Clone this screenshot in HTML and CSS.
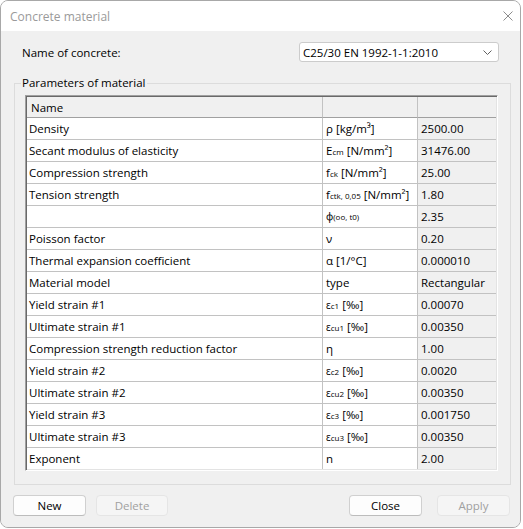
FILE: index.html
```html
<!DOCTYPE html>
<html>
<head>
<meta charset="utf-8">
<link rel="stylesheet" href="styles.css">
</head>
<body>
<div class="window">
  <div class="titlebar">
    <span class="title">Concrete material</span>
    <svg class="close" width="10" height="10" viewBox="0 0 10 10"><path d="M0.5 0.5 L9.5 9.5 M9.5 0.5 L0.5 9.5" stroke="#8c8c8c" stroke-width="1" fill="none"/></svg>
  </div>
  <div class="content">
    <div class="name-row">
      <span>Name of concrete:</span>
      <div class="combo">
        <span>C25/30 EN 1992-1-1:2010</span>
        <svg width="9" height="5" viewBox="0 0 9 5"><path d="M0.5 0.5 L4.5 4.5 L8.5 0.5" stroke="#606060" stroke-width="1" fill="none"/></svg>
      </div>
    </div>
    <fieldset class="group">
      <legend>Parameters of material</legend>
      <div class="grid">
        <div class="cell head name">Name</div><div class="cell head"></div><div class="cell head val"></div>

        <div class="cell">Density</div><div class="cell unit">ρ [kg/m³]</div><div class="cell val">2500.00</div>
        <div class="cell">Secant modulus of elasticity</div><div class="cell unit">E<span class="sub">cm</span>&nbsp;[N/mm²]</div><div class="cell val">31476.00</div>
        <div class="cell">Compression strength</div><div class="cell unit">f<span class="sub">ck</span>&nbsp;[N/mm²]</div><div class="cell val">25.00</div>
        <div class="cell">Tension strength</div><div class="cell unit">f<span class="sub">ctk, 0,05</span>&nbsp;[N/mm²]</div><div class="cell val">1.80</div>
        <div class="cell"></div><div class="cell unit"><span class="sym">ϕ</span><span class="sub">(oo, t0)</span></div><div class="cell val">2.35</div>
        <div class="cell">Poisson factor</div><div class="cell unit">ν</div><div class="cell val">0.20</div>
        <div class="cell">Thermal expansion coefficient</div><div class="cell unit">α [1/°C]</div><div class="cell val">0.000010</div>
        <div class="cell">Material model</div><div class="cell unit">type</div><div class="cell val">Rectangular</div>
        <div class="cell">Yield strain #1</div><div class="cell unit"><span class="sym">ε</span><span class="sub">c1</span>&nbsp;[‰]</div><div class="cell val">0.00070</div>
        <div class="cell">Ultimate strain #1</div><div class="cell unit"><span class="sym">ε</span><span class="sub">cu1</span>&nbsp;[‰]</div><div class="cell val">0.00350</div>
        <div class="cell">Compression strength reduction factor</div><div class="cell unit">η</div><div class="cell val">1.00</div>
        <div class="cell">Yield strain #2</div><div class="cell unit"><span class="sym">ε</span><span class="sub">c2</span>&nbsp;[‰]</div><div class="cell val">0.0020</div>
        <div class="cell">Ultimate strain #2</div><div class="cell unit"><span class="sym">ε</span><span class="sub">cu2</span>&nbsp;[‰]</div><div class="cell val">0.00350</div>
        <div class="cell">Yield strain #3</div><div class="cell unit"><span class="sym">ε</span><span class="sub">c3</span>&nbsp;[‰]</div><div class="cell val">0.001750</div>
        <div class="cell">Ultimate strain #3</div><div class="cell unit"><span class="sym">ε</span><span class="sub">cu3</span>&nbsp;[‰]</div><div class="cell val">0.00350</div>
        <div class="cell last">Exponent</div><div class="cell unit last">n</div><div class="cell val last">2.00</div>
      </div>
    </fieldset>
    <div class="buttons">
      <button class="btn">New</button>
      <button class="btn disabled">Delete</button>
      <span class="spacer"></span>
      <button class="btn">Close</button>
      <button class="btn disabled apply">Apply</button>
    </div>
  </div>
</div>
</body>
</html>
```
FILE: styles.css
```css
html, body {
  margin: 0;
  padding: 0;
  background: #ffffff;
}
body {
  font-family: "Open Sans", "Noto Sans", sans-serif;
  font-size: 11.5px;
  color: #000;
}
.window {
  width: 521px;
  height: 528px;
  box-sizing: border-box;
  border: 1px solid #a8a8a8;
  border-radius: 8px;
  overflow: hidden;
  display: flex;
  flex-direction: column;
  background: #f0f0f0;
}
.titlebar {
  height: 30px;
  flex: none;
  background: #ffffff;
  display: flex;
  align-items: center;
  justify-content: space-between;
  padding: 0 7px 0 9px;
}
.title {
  color: #9a9a9a;
  font-size: 12px;
}
.content {
  flex: 1;
  background: #f0f0f0;
  display: flex;
  flex-direction: column;
}
.name-row {
  margin: 11px 21px 0 21px;
  height: 20px;
  display: flex;
  align-items: center;
  justify-content: space-between;
}
.combo {
  width: 200px;
  height: 20px;
  box-sizing: border-box;
  background: #fff;
  border: 1px solid #cccccc;
  border-radius: 3px;
  display: flex;
  align-items: center;
  justify-content: space-between;
  padding: 0 6px 0 3px;
}
.group {
  margin: 13px 0 0 13px;
  width: 497px;
  box-sizing: border-box;
  border: 1px solid #dcdcdc;
  padding: 4px 12px 13px 10px;
  min-width: 0;
}
.group legend {
  padding: 0 1px;
  margin-left: -4px;
  line-height: 16px;
}
.grid {
  display: grid;
  grid-template-columns: 296px 95px 78px;
  border-style: solid;
  border-width: 1px;
  border-color: #a0a0a0 #ffffff #ffffff #a0a0a0;
  padding: 1px;
  box-shadow: inset 1px 1px 0 #696969, inset -1px -1px 0 #e3e3e3;
  background: #fff;
}
.cell {
  height: 22px;
  box-sizing: border-box;
  border-right: 1px solid #c2c2c2;
  border-bottom: 1px solid #c2c2c2;
  padding-left: 2px;
  display: flex;
  align-items: center;
  white-space: nowrap;
  overflow: hidden;
  background: #fff;
}
.cell.unit {
  padding-left: 3px;
  align-items: baseline;
  padding-top: 3px;
}
.cell.val {
  background: #f0f0f0;
  border-right: none;
  padding-left: 3px;
}
.cell.head {
  height: 21px;
  background: #f0f0f0;
  border-bottom-color: #a0a0a0;
}
.cell.head.name {
  padding-left: 4px;
}
.cell.last {
  height: 21px;
  border-bottom: none;
}
.sub {
  font-size: 8px;
}
.sym {
  font-size: 10px;
}
.buttons {
  margin: 10px 10px 0 12px;
  display: flex;
  align-items: center;
}
.spacer {
  flex: 1;
}
.btn {
  width: 73px;
  height: 21px;
  box-sizing: border-box;
  font-family: inherit;
  font-size: 11.5px;
  color: #000;
  background: #fdfdfd;
  border: 1px solid #d0d0d0;
  border-bottom-color: #bcbcbc;
  border-radius: 4px;
  padding: 0;
  margin-right: 10px;
}
.btn.disabled {
  width: 72px;
  color: #a0a0a0;
  background: #f5f5f5;
  border-color: #e5e5e5;
}
.btn.apply {
  width: 73px;
  margin-right: 0;
  margin-left: 5px;
}
```
